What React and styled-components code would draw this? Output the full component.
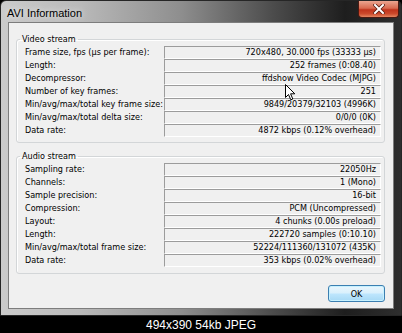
import React from "react";
import styled, { createGlobalStyle } from "styled-components";

const GlobalStyle = createGlobalStyle`
  html, body {
    margin: 0;
    padding: 0;
    background: #000;
  }
  body {
    width: 402px;
    height: 333px;
    overflow: hidden;
    font-family: "Liberation Sans", Arial, sans-serif;
  }
`;

const dialogFont = `"DejaVu Sans Condensed", "DejaVu Sans", sans-serif`;

const Page = styled.div`
  width: 402px;
  height: 333px;
  display: flex;
  flex-direction: column;
  background: #000;
  position: relative;
`;

const Window = styled.div`
  height: 316px;
  box-sizing: border-box;
  display: flex;
  flex-direction: column;
  padding: 0 7px 6px 7px;
  border: 1px solid #262626;
  border-top-left-radius: 6px;
  border-top-right-radius: 6px;
  background: linear-gradient(
    to right,
    #cbcbcb 0%,
    #b9b9b9 20%,
    #8e8e8e 45%,
    #4c4c4c 68%,
    #1e1e1e 86%,
    #2e2e2e 100%
  );
`;

const TitleBar = styled.div`
  height: 21px;
  display: flex;
  align-items: flex-start;
  justify-content: space-between;
`;

const Title = styled.span`
  margin: 6px 0 0 -1px;
  font-size: 11px;
  color: #000;
  text-shadow: 0 0 6px rgba(255, 255, 255, 0.9);
`;

const CloseButton = styled.div`
  width: 41px;
  height: 17px;
  margin-right: -5px;
  box-sizing: border-box;
  border: 1px solid #4a1a12;
  border-top: none;
  border-radius: 0 0 4px 4px;
  background: linear-gradient(#eba590 0%, #d86a50 45%, #c0341c 55%, #cc4a2c 80%, #e58660 100%);
  display: flex;
  align-items: center;
  justify-content: center;
`;

const Client = styled.div`
  flex: 1;
  background: #f0f0f0;
  border: 1px solid #7d7d7d;
  padding: 11px 8px 0 7px;
  display: flex;
  flex-direction: column;
`;

const Group = styled.fieldset`
  margin: ${(p) => (p.$first ? "0" : "8px")} 0 0 0;
  padding: 1px 3px ${(p) => (p.$first ? "5px" : "6px")} 8px;
  border: 1px solid #d3d6d8;
  border-radius: 3px;
  min-width: 0;
  box-shadow: inset 1px 1px 0 #fff;
`;

const Legend = styled.legend`
  margin-left: -5px;
  padding: 0 2px;
  font-family: ${dialogFont};
  font-size: 9px;
  line-height: 11px;
  color: #000;
`;

const Row = styled.div`
  display: grid;
  grid-template-columns: 139px 1fr;
  height: 13px;
  align-items: stretch;
`;

const Label = styled.span`
  font-family: ${dialogFont};
  font-size: 9px;
  line-height: 13px;
  color: #000;
  white-space: nowrap;
`;

const Value = styled.span`
  box-sizing: border-box;
  border-top: 1px solid #9c9c9c;
  border-left: 1px solid #9c9c9c;
  border-right: 1px solid #fff;
  border-bottom: 1px solid #fff;
  padding-right: 4px;
  text-align: right;
  font-family: ${dialogFont};
  font-size: 9px;
  line-height: 11px;
  color: #000;
  white-space: nowrap;
`;

const Footer = styled.div`
  display: flex;
  justify-content: flex-end;
  margin-top: 11px;
`;

const OkButton = styled.button`
  width: 57px;
  height: 17px;
  box-sizing: border-box;
  border: 1px solid #3c7fb1;
  border-radius: 3px;
  background: linear-gradient(#eaf6fd 0%, #d9f0fc 48%, #bee6fd 52%, #a7d9f5 100%);
  box-shadow: inset 0 0 0 1px #c6f1ff;
  font-family: ${dialogFont};
  font-size: 9px;
  color: #000;
  padding: 0;
`;

const Caption = styled.div`
  flex: 1;
  display: flex;
  align-items: center;
  justify-content: center;
  color: #fff;
  font-size: 12px;
`;

const Cursor = styled.svg`
  position: absolute;
  left: 285px;
  top: 84px;
`;

const video = [
  ["Frame size, fps (µs per frame):", "720x480, 30.000 fps (33333 µs)"],
  ["Length:", "252 frames (0:08.40)"],
  ["Decompressor:", "ffdshow Video Codec (MJPG)"],
  ["Number of key frames:", "251"],
  ["Min/avg/max/total key frame size:", "9849/20379/32103 (4996K)"],
  ["Min/avg/max/total delta size:", "0/0/0 (0K)"],
  ["Data rate:", "4872 kbps (0.12% overhead)"],
];

const audio = [
  ["Sampling rate:", "22050Hz"],
  ["Channels:", "1 (Mono)"],
  ["Sample precision:", "16-bit"],
  ["Compression:", "PCM (Uncompressed)"],
  ["Layout:", "4 chunks (0.00s preload)"],
  ["Length:", "222720 samples (0:10.10)"],
  ["Min/avg/max/total frame size:", "52224/111360/131072 (435K)"],
  ["Data rate:", "353 kbps (0.02% overhead)"],
];

function InfoGroup({ title, rows, first }) {
  return (
    <Group $first={first}>
      <Legend>{title}</Legend>
      {rows.map(([label, value]) => (
        <Row key={label}>
          <Label>{label}</Label>
          <Value>{value}</Value>
        </Row>
      ))}
    </Group>
  );
}

export default function App() {
  return (
    <Page>
      <GlobalStyle />
      <Window>
        <TitleBar>
          <Title>AVI Information</Title>
          <CloseButton>
            <svg width="12" height="10" viewBox="0 0 12 10">
              <path d="M2 1 L10 9 M10 1 L2 9" stroke="#5a1e12" strokeWidth="3.6" strokeLinecap="square" />
              <path d="M2 1 L10 9 M10 1 L2 9" stroke="#fff" strokeWidth="2" strokeLinecap="square" />
            </svg>
          </CloseButton>
        </TitleBar>
        <Client>
          <InfoGroup title="Video stream" rows={video} first />
          <InfoGroup title="Audio stream" rows={audio} />
          <Footer>
            <OkButton>OK</OkButton>
          </Footer>
        </Client>
      </Window>
      <Caption>494x390 54kb JPEG</Caption>
      <Cursor width="11" height="17" viewBox="0 0 11 17">
        <path d="M0.5 0.5 L0.5 13.5 L3.5 10.5 L5.8 15.8 L7.8 15 L5.6 9.8 L9.8 9.8 Z" fill="#fff" stroke="#000" strokeWidth="1" strokeLinejoin="round" />
      </Cursor>
    </Page>
  );
}
